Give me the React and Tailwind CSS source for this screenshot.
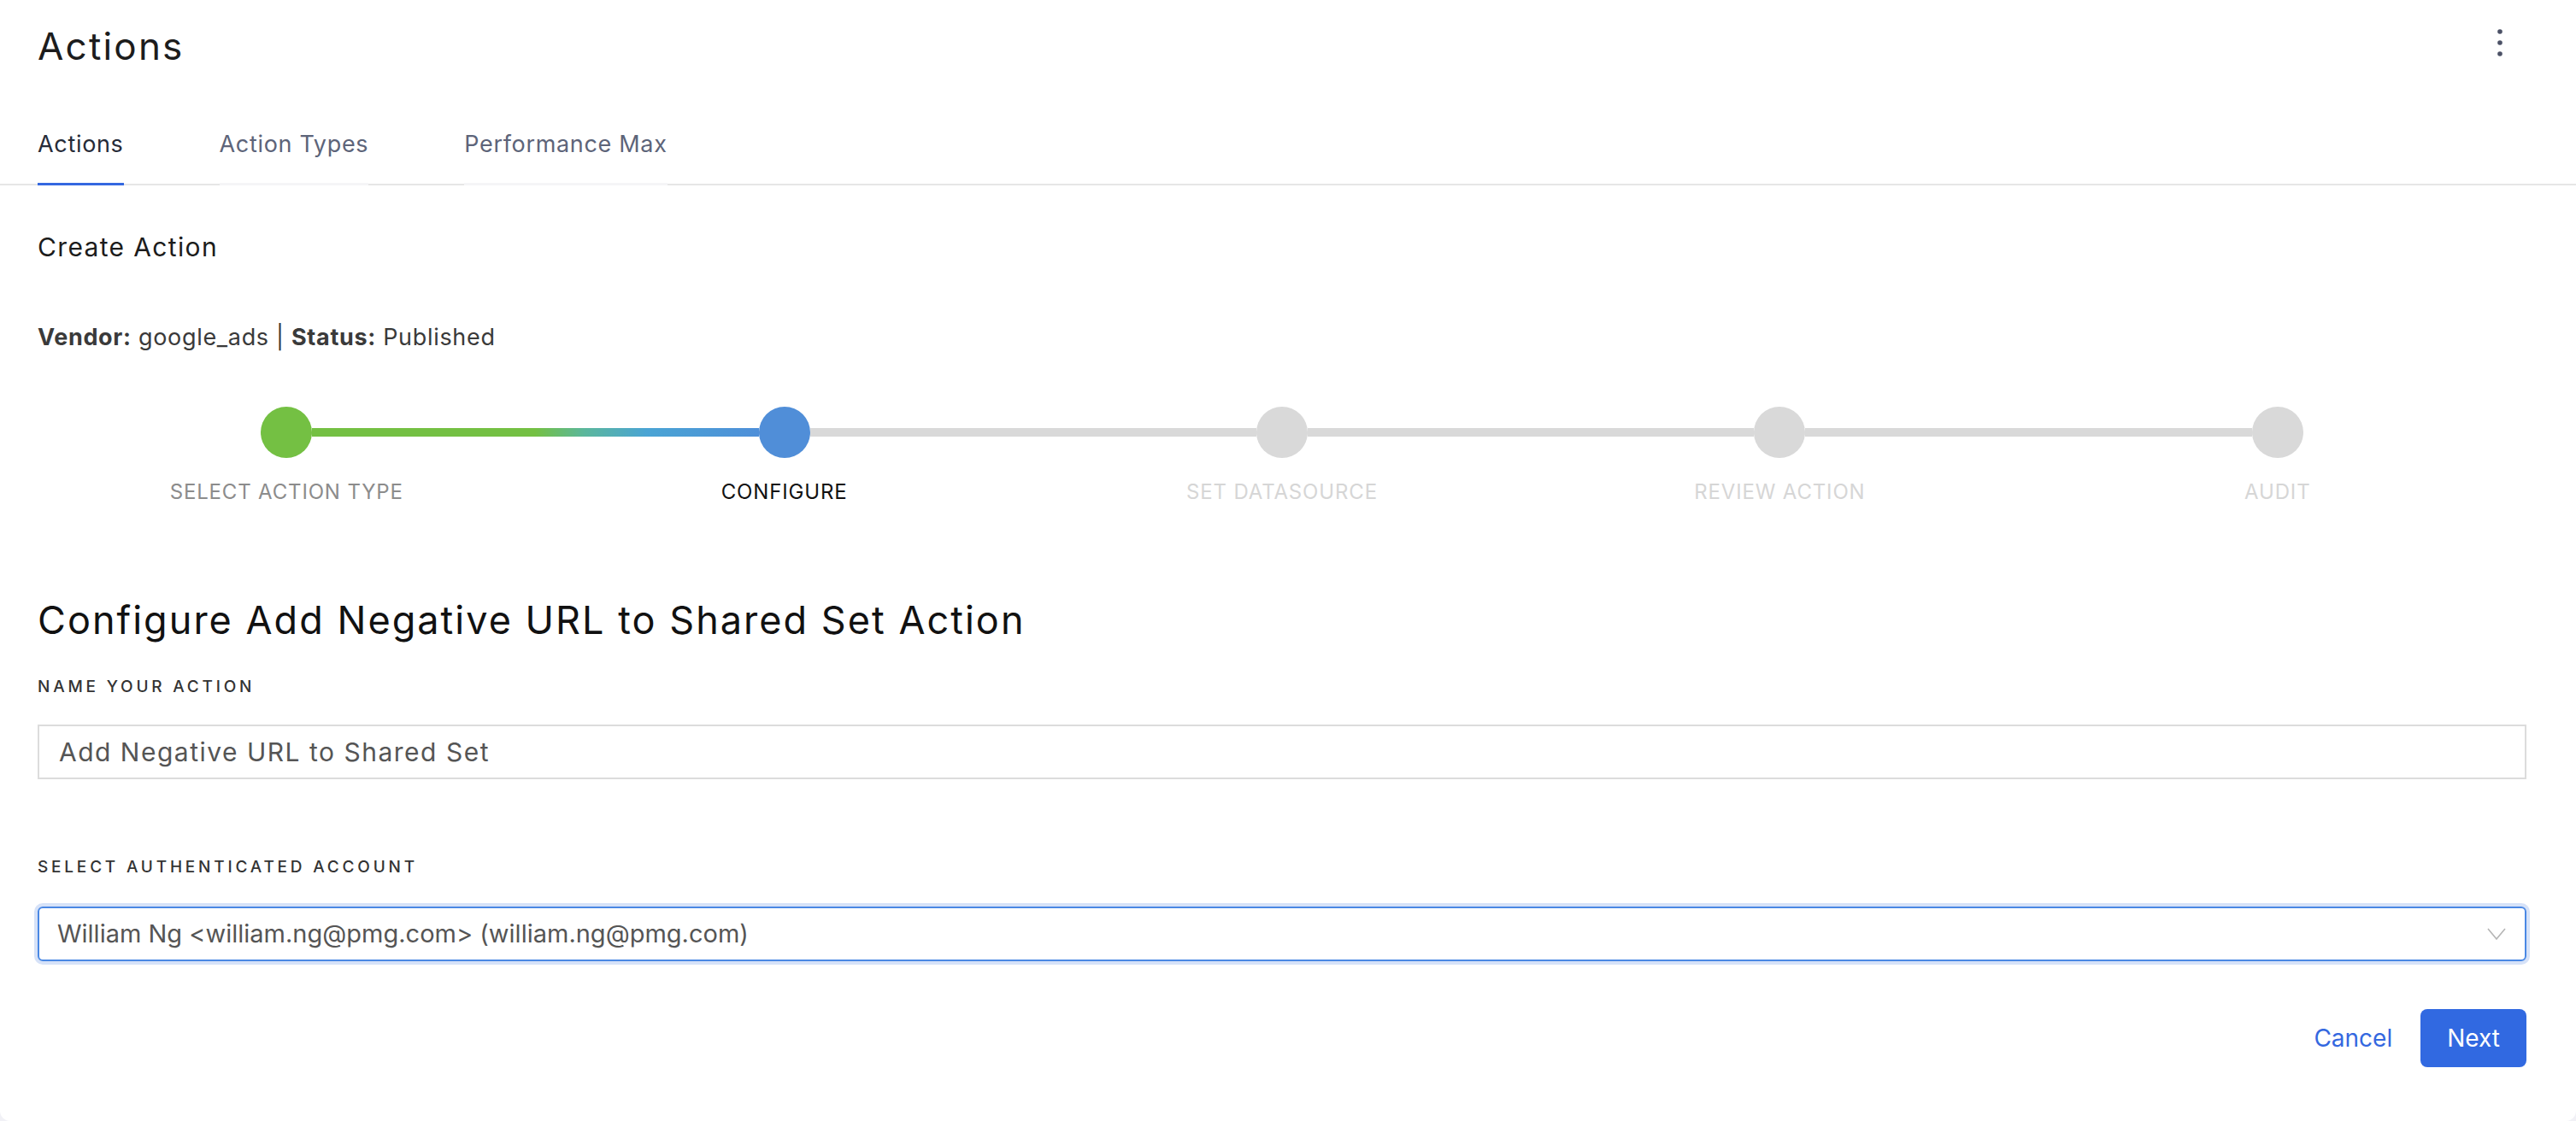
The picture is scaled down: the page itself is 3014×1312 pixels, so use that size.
const steps = [
  { label: "SELECT ACTION TYPE", state: "done" },
  { label: "CONFIGURE", state: "active" },
  { label: "SET DATASOURCE", state: "todo" },
  { label: "REVIEW ACTION", state: "todo" },
  { label: "AUDIT", state: "todo" },
];

const tabs = ["Actions", "Action Types", "Performance Max"];

function Step({ step, index }) {
  const left =
    index === 0
      ? "bg-transparent"
      : index === 1
      ? "bg-[linear-gradient(90deg,#74c043_0%,#5bb79c_22%,#4aa4d4_50%,#4e8fd9_100%)]"
      : "bg-[#d9d9d9]";
  const right =
    index === 0 ? "bg-[#74c043]" : index === steps.length - 1 ? "bg-transparent" : "bg-[#d9d9d9]";
  const dot =
    step.state === "done" ? "bg-[#74c043]" : step.state === "active" ? "bg-[#508ed8]" : "bg-[#d9d9d9]";
  const text =
    step.state === "done" ? "text-[#8c8c8c]" : step.state === "active" ? "text-[#111111]" : "text-[#d6d6d6]";

  return (
    <div className="flex flex-col items-center">
      <div className="flex w-full items-center">
        <div className={`h-[10px] flex-1 ${left}`} />
        <div className={`h-[60px] w-[60px] shrink-0 rounded-full ${dot}`} />
        <div className={`h-[10px] flex-1 ${right}`} />
      </div>
      <span className={`mt-[24px] text-[24px] leading-[32px] tracking-[0.035em] ${text}`}>{step.label}</span>
    </div>
  );
}

export default function App() {
  return (
    <div className="min-h-screen bg-[#f1f1f6] font-['Inter',sans-serif]">
      <div className="rounded-b-[12px] bg-white pb-[63px]">
        {/* header */}
        <div className="flex items-start justify-between pl-[44px] pr-[69px] pt-[27px]">
          <h1 className="text-[44px] leading-[54px] font-normal tracking-[0.05em] text-[#1c1c1c]">Actions</h1>
          <button className="mt-[5px] flex h-[36px] w-[40px] items-center justify-center">
            <svg width="10" height="36" viewBox="0 0 10 36">
              <circle cx="5" cy="5" r="2.8" fill="#4b5166" />
              <circle cx="5" cy="18" r="2.8" fill="#4b5166" />
              <circle cx="5" cy="31" r="2.8" fill="#4b5166" />
            </svg>
          </button>
        </div>

        <div className="mt-[71px] flex gap-[112px] border-b-2 border-[#e6e6e6] px-[44px]">
          {tabs.map((t, i) => (
            <button
              key={t}
              className={`-mb-[2px] border-b-[3px] pb-[28px] text-[27px] leading-[34px] tracking-[0.025em] ${
                i === 0 ? "border-[#3468e0] text-[#262b38]" : "border-[#f5f5f7] text-[#5d6479]"
              }`}
            >
              {t}
            </button>
          ))}
        </div>

        {/* content */}
        <div className="pl-[44px] pr-[58px]">
          <h2 className="pt-[52px] text-[30px] leading-[40px] tracking-[0.045em] text-[#1c1c1c]">Create Action</h2>

          <p className="mt-[68px] text-[27px] leading-[36px] tracking-[0.025em] text-[#3a3a3a]">
            <span className="font-bold">Vendor:</span> google_ads | <span className="font-bold">Status:</span>{" "}
            Published
          </p>

          <div className="mt-[63px] grid grid-cols-5">
            {steps.map((s, i) => (
              <Step key={s.label} step={s} index={i} />
            ))}
          </div>

          <h3 className="mt-[106px] text-[45px] leading-[56px] tracking-[0.045em] text-[#111111]">
            Configure Add Negative URL to Shared Set Action
          </h3>

          <label className="mt-[37px] block text-[19px] leading-[26px] font-medium tracking-[0.2em] text-[#333333]">
            NAME YOUR ACTION
          </label>
          <div className="mt-[31px] flex h-[64px] items-center border-2 border-[#dcdcdc] pl-[23px] text-[30px] tracking-[0.05em] text-[#555555]">
            Add Negative URL to Shared Set
          </div>

          <label className="mt-[90px] block text-[19px] leading-[26px] font-medium tracking-[0.2em] text-[#333333]">
            SELECT AUTHENTICATED ACCOUNT
          </label>
          <div className="mt-[33px] flex h-[64px] items-center justify-between rounded-[6px] border-2 border-[#4a88e4] pl-[21px] pr-[22px] text-[29px] text-[#555555] ring-4 ring-[#d6e2f8]">
            <span>William Ng &lt;william.ng@pmg.com&gt; (william.ng@pmg.com)</span>
            <svg width="22" height="14" viewBox="0 0 22 14">
              <polyline points="1,1 11,13 21,1" fill="none" stroke="#b5b5b5" strokeWidth="1.6" />
            </svg>
          </div>

          <div className="mt-[56px] flex items-center justify-end gap-[33px]">
            <button className="text-[28px] text-[#3468e0]">Cancel</button>
            <button className="h-[68px] rounded-[8px] bg-[#3169e1] px-[31px] text-[28px] text-white">Next</button>
          </div>
        </div>
      </div>
    </div>
  );
}
